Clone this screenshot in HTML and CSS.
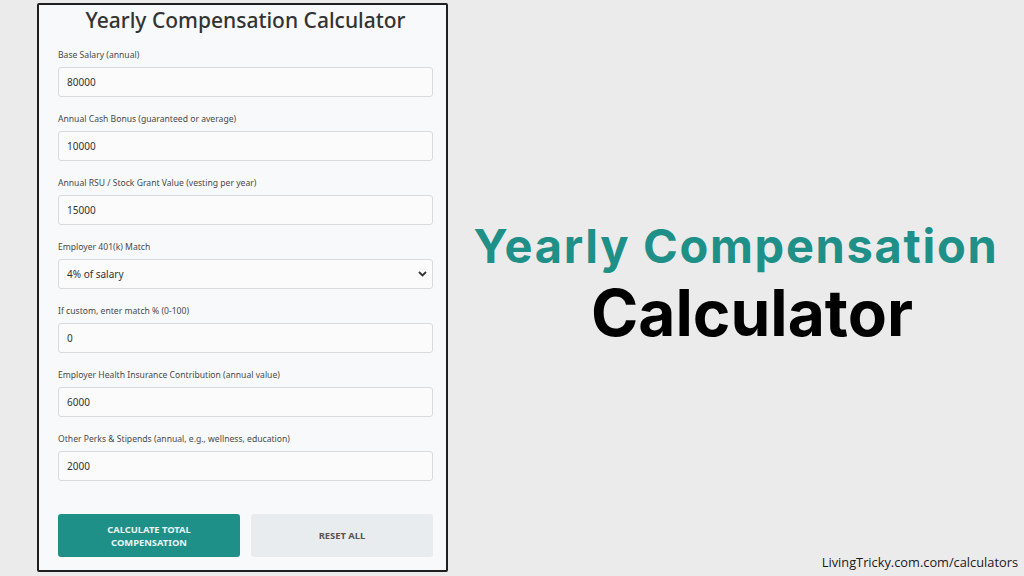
FILE: index.html
```html
<!DOCTYPE html>
<html>
<head>
<meta charset="utf-8">
<link rel="stylesheet" href="styles.css">
</head>
<body>
<div class="page">
  <div class="card">
    <h1 class="title">Yearly Compensation Calculator</h1>
    <div class="field">
      <label class="label">Base Salary (annual)</label>
      <div class="input">80000</div>
    </div>
    <div class="field">
      <label class="label">Annual Cash Bonus (guaranteed or average)</label>
      <div class="input">10000</div>
    </div>
    <div class="field">
      <label class="label">Annual RSU / Stock Grant Value (vesting per year)</label>
      <div class="input">15000</div>
    </div>
    <div class="field">
      <label class="label">Employer 401(k) Match</label>
      <div class="input select">4% of salary
        <svg class="chev" width="9" height="6" viewBox="0 0 9 6"><path d="M1 1 L4.5 4.5 L8 1" fill="none" stroke="#333" stroke-width="1.8"/></svg>
      </div>
    </div>
    <div class="field">
      <label class="label">If custom, enter match % (0-100)</label>
      <div class="input">0</div>
    </div>
    <div class="field">
      <label class="label">Employer Health Insurance Contribution (annual value)</label>
      <div class="input">6000</div>
    </div>
    <div class="field">
      <label class="label">Other Perks &amp; Stipends (annual, e.g., wellness, education)</label>
      <div class="input">2000</div>
    </div>
    <div class="buttons">
      <div class="btn btn-primary">CALCULATE TOTAL<br>COMPENSATION</div>
      <div class="btn btn-secondary">RESET ALL</div>
    </div>
  </div>
  <div class="side">
    <div class="headline">
      <div class="h-line1">Yearly Compensation</div>
      <div class="h-line2">Calculator</div>
    </div>
    <div class="footer">LivingTricky.com.com/calculators</div>
  </div>
</div>
</body>
</html>
```

FILE: styles.css
```css
* { box-sizing: border-box; }
html, body { margin: 0; padding: 0; }
body {
  background: #ebebeb;
  font-family: "Noto Sans", "Open Sans", sans-serif;
  width: 1024px;
  height: 576px;
  overflow: hidden;
}
.page {
  display: flex;
  height: 576px;
  padding: 3px 0 4px 37px;
}
.card {
  width: 411px;
  height: 569px;
  background: #f8f9fa;
  border: 2px solid #1f1f1f;
  border-radius: 2px;
  padding: 0 13px 0 19px;
  display: flex;
  flex-direction: column;
}
.title {
  margin: 2px 0 16px;
  font-size: 21px;
  font-weight: 500;
  color: #333;
  text-align: center;
  line-height: 26px;
  height: 26px;
}
.field {
  display: flex;
  flex-direction: column;
  margin-bottom: 16px;
}
.label {
  font-size: 8.6px;
  line-height: 12px;
  height: 12px;
  color: #4a4a4a;
  margin-bottom: 6px;
}
.input {
  height: 30px;
  border: 1px solid #dadada;
  border-radius: 3px;
  background: #fbfbfb;
  font-size: 10px;
  color: #333;
  display: flex;
  align-items: center;
  padding: 0 8px;
}
.select {
  justify-content: space-between;
  padding-right: 5px;
}
.chev { display: block; }
.buttons {
  display: flex;
  gap: 11px;
  margin-top: 17px;
}
.btn {
  flex: 1;
  height: 43px;
  border-radius: 3px;
  display: flex;
  align-items: center;
  justify-content: center;
  text-align: center;
  font-size: 9.4px;
  font-weight: 700;
  line-height: 13px;
}
.btn-primary {
  background: #1e9088;
  color: #e8f4f2;
}
.btn-secondary {
  background: #e9ecee;
  color: #555;
}
.side {
  flex: 1;
  display: flex;
  flex-direction: column;
  align-items: stretch;
}
.headline {
  margin-top: 215px;
  text-align: center;
  font-family: "Inter", "Noto Sans", sans-serif;
  font-weight: 700;
}
.h-line1 {
  color: #1e9088;
  font-size: 47px;
  line-height: 56px;
  letter-spacing: 1.7px;
  padding-right: 0;
}
.h-line2 {
  color: #000;
  font-size: 64px;
  line-height: 78px;
  padding-left: 32px;
}
.footer {
  margin-top: auto;
  align-self: flex-end;
  margin-right: 6px;
  margin-bottom: 1px;
  font-family: "Open Sans", "Noto Sans", sans-serif;
  font-size: 12.8px;
  color: #1a1a1a;
}
```
